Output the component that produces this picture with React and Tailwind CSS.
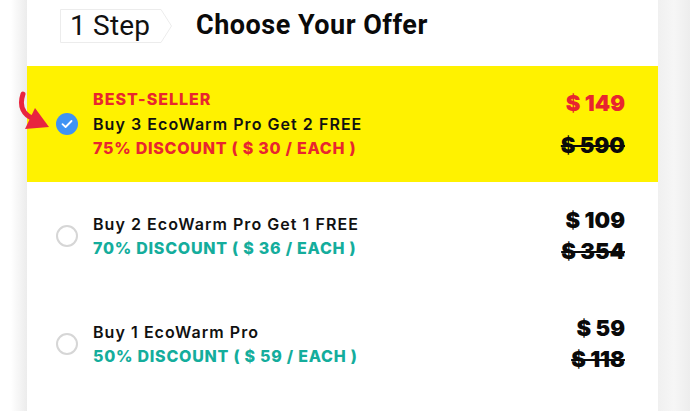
const offers = [
  {
    id: 3,
    badge: "BEST-SELLER",
    title: "Buy 3 EcoWarm Pro Get 2 FREE",
    discount: "75% DISCOUNT ( $ 30 / EACH )",
    price: "$ 149",
    old: "$ 590",
    selected: true,
  },
  {
    id: 2,
    title: "Buy 2 EcoWarm Pro Get 1 FREE",
    discount: "70% DISCOUNT ( $ 36 / EACH )",
    price: "$ 109",
    old: "$ 354",
  },
  {
    id: 1,
    title: "Buy 1 EcoWarm Pro",
    discount: "50% DISCOUNT ( $ 59 / EACH )",
    price: "$ 59",
    old: "$ 118",
  },
];

function StepBadge() {
  return (
    <div className="relative h-[34px] w-[113px] flex items-center pl-[10px]">
      <svg
        className="absolute inset-0"
        width="113"
        height="34"
        viewBox="0 0 113 34"
        fill="none"
      >
        <path
          d="M0.5 0.5 H101 L111.5 17 L101 33.5 H0.5 Z"
          stroke="#ececec"
          strokeWidth="1"
          fill="#fff"
        />
      </svg>
      <span className="relative text-[28px] leading-none text-[#111] tracking-[0.2px] font-['Roboto',sans-serif]">
        1 Step
      </span>
    </div>
  );
}

function PointerArrow() {
  return (
    <svg
      className="absolute left-[-38px] top-[-23px]"
      width="34"
      height="42"
      viewBox="0 0 34 42"
      fill="none"
    >
      <path
        d="M5 4 C1 16 5 25 16 29"
        stroke="#e8253f"
        strokeWidth="5"
        strokeLinecap="round"
      />
      <path d="M17 18 L31 37 L7 39 Z" fill="#e8253f" />
    </svg>
  );
}

function Radio({ checked }) {
  if (checked) {
    return (
      <div className="relative w-[22px] h-[22px] rounded-full bg-[#3f93f4] flex items-center justify-center">
        <PointerArrow />
        <svg width="12" height="10" viewBox="0 0 12 10" fill="none">
          <path
            d="M1.5 5.2 L4.6 8 L10.5 2"
            stroke="#fff"
            strokeWidth="1.8"
            strokeLinecap="round"
            strokeLinejoin="round"
          />
        </svg>
      </div>
    );
  }
  return <div className="w-[22px] h-[22px] rounded-full border-2 border-[#d6d6d6] bg-white" />;
}

function OfferRow({ offer }) {
  const hot = offer.selected;
  return (
    <div
      className={`flex items-center pl-[29px] pr-[33px] ${
        hot ? "h-[116px] bg-[#fff200]" : "h-[108px] bg-white"
      }`}
    >
      <Radio checked={hot} />
      <div className="ml-[15px] flex flex-col text-[16px] leading-[24.5px]">
        {offer.badge && (
          <span className="font-extrabold text-[16px] text-[#e8262f] tracking-[1px]">
            {offer.badge}
          </span>
        )}
        <span className="font-semibold text-[#111] tracking-[1.05px]">{offer.title}</span>
        <span
          className={`font-extrabold text-[16px] tracking-[0.75px] ${
            hot ? "text-[#e8262f]" : "text-[#14ad9c]"
          }`}
        >
          {offer.discount}
        </span>
      </div>
      <div
        className={`ml-auto flex flex-col items-end font-black text-[22px] leading-[31px] ${
          hot ? "gap-[11px]" : "gap-0"
        }`}
      >
        <span className={hot ? "text-[#e8262f]" : "text-[#0a0a0a]"}>{offer.price}</span>
        <span className="text-[#0a0a0a] line-through decoration-[2px]">{offer.old}</span>
      </div>
    </div>
  );
}

export default function App() {
  return (
    <div className="w-[697px] h-[411px] overflow-hidden flex bg-white font-['Inter',sans-serif]">
      <div className="w-[27px] shrink-0 bg-gradient-to-r from-white from-40% to-[#ececec]" />
      <div className="w-[631px] shrink-0 bg-white flex flex-col">
        <div className="h-[66px] flex items-start pt-[9px] pl-[33px]">
          <StepBadge />
          <h2 className="ml-[23px] mt-[0px] text-[27px] leading-[32px] font-bold tracking-[0.5px] text-[#0a0a0a] font-['Roboto',sans-serif]">
            Choose Your Offer
          </h2>
        </div>
        {offers.map((o) => (
          <OfferRow key={o.id} offer={o} />
        ))}
      </div>
      <div className="w-[32px] shrink-0 bg-gradient-to-r from-[#f0f0f0] via-[#f6f6f6] to-[#ededed]" />
      <div className="flex-1 bg-white" />
    </div>
  );
}
